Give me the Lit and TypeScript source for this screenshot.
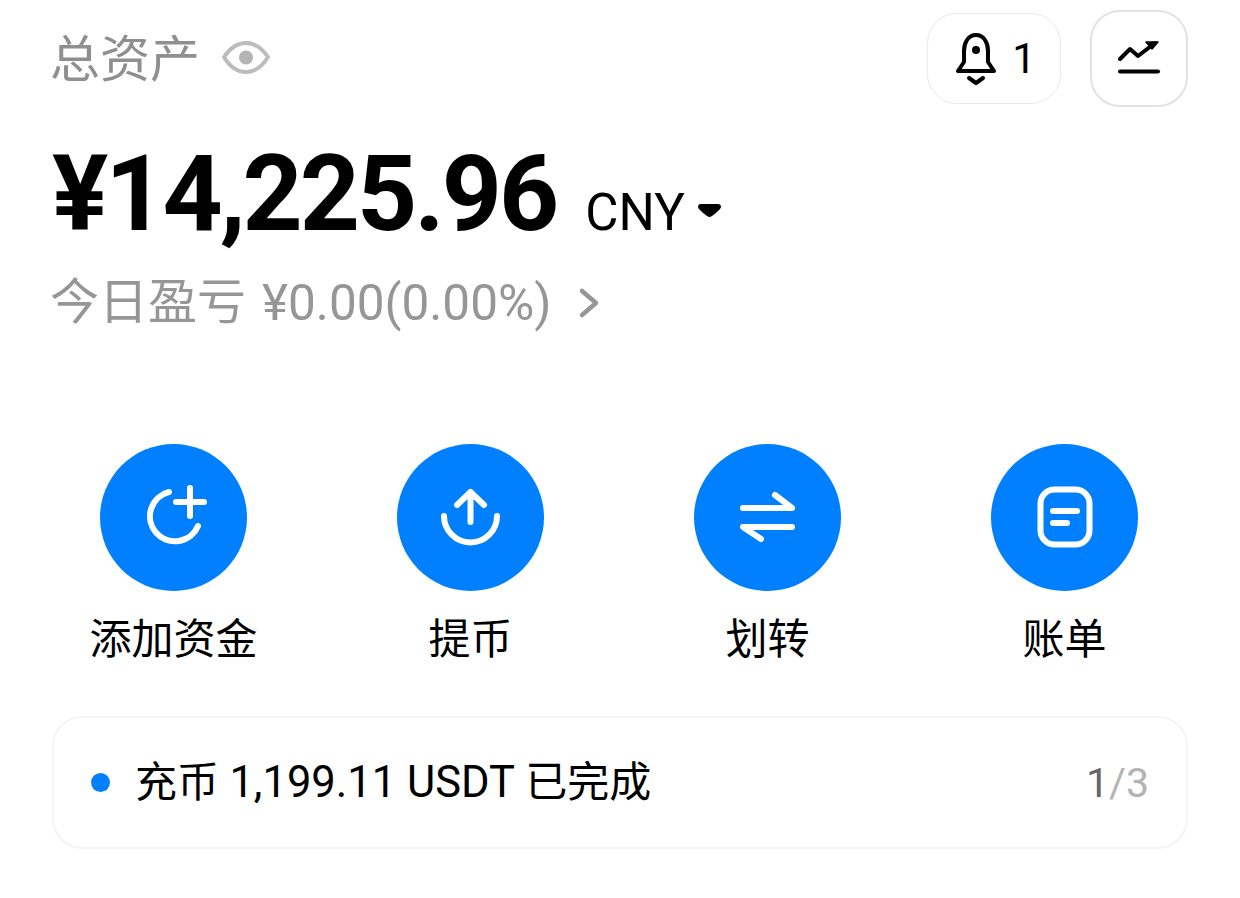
import { LitElement, html, css, svg } from 'lit';
import { customElement } from 'lit/decorators.js';

const actions = [
  {
    label: '添加资金',
    icon: svg`<path d="M69 48A25 25 0 1 0 98 82"/><path d="M76 58H104M90 44V72"/>`,
  },
  {
    label: '提币',
    icon: svg`<path d="M47 72A26.5 26.5 0 0 0 100 72"/><path d="M73.5 48V78M60 61L73.5 48L87 61"/>`,
  },
  {
    label: '划转',
    icon: svg`<path d="M49 64H98L81 51"/><path d="M98 83H49L67 95"/>`,
  },
  {
    label: '账单',
    icon: svg`<rect x="49.5" y="45.5" width="49" height="55" rx="14"/><path d="M62 67H86M62 79H76"/>`,
  },
];

@customElement('app-root')
export class AppRoot extends LitElement {
  static styles = css`
    :host {
      display: block;
      box-sizing: border-box;
      height: 898px;
      padding: 10px 52px 0;
      background: #fff;
      color: #000;
      font-family: Roboto, 'Noto Sans CJK SC', sans-serif;
    }

    svg {
      display: block;
      fill: none;
      stroke-linecap: round;
      stroke-linejoin: round;
    }

    .header {
      display: flex;
      align-items: center;
      height: 97px;
    }

    .title {
      display: flex;
      align-items: center;
      gap: 20px;
      flex: 1;
      margin-left: -2px;
      font-size: 50px;
      color: #8f8f8f;
    }

    .title span {
      margin-top: -8px;
    }

    .eye {
      stroke: #bcbcbc;
      stroke-width: 4;
      margin-top: -3px;
    }

    .eye circle {
      fill: #b4b4b4;
      stroke: none;
    }

    .bell,
    .chart {
      display: flex;
      align-items: center;
      justify-content: center;
      box-sizing: border-box;
      background: #fff;
    }

    .bell {
      gap: 12px;
      width: 134px;
      height: 91px;
      margin-right: 29px;
      border: 1px solid #e9e9e9;
      border-radius: 30px;
      font-size: 42px;
    }

    .chart {
      width: 98px;
      height: 97px;
      border: 2px solid #e2e2e2;
      border-radius: 30px;
    }

    .bell svg,
    .chart svg {
      stroke: #000;
      stroke-width: 4;
    }

    .bell circle,
    .chart .head {
      fill: #000;
    }

    .bell circle {
      stroke: none;
    }

    .amount-row {
      display: flex;
      align-items: baseline;
      margin-top: 26px;
    }

    .amount {
      font-size: 105px;
      font-weight: 700;
      line-height: 123px;
      letter-spacing: -3px;
    }

    .currency {
      margin-left: 29px;
      font-size: 51px;
    }

    .caret {
      align-self: center;
      margin: 32px 0 0 13px;
      fill: #000;
    }

    .pnl {
      display: flex;
      align-items: center;
      margin: 13px 0 0 -2px;
      font-size: 49px;
      line-height: 68px;
      color: #969696;
    }

    .pnl .value {
      margin-left: 16px;
      font-size: 49.500px;
    }

    .pnl svg {
      margin-left: 27px;
      stroke: #969696;
      stroke-width: 4.5;
    }

    .actions {
      display: grid;
      grid-template-columns: repeat(4, 297px);
      margin: 107px -27px 0;
    }

    .action {
      display: flex;
      flex-direction: column;
      align-items: center;
      gap: 20px;
      font-size: 42px;
      line-height: 58px;
    }

    .circle {
      width: 147px;
      height: 147px;
      border-radius: 50%;
      background: #0080ff;
    }

    .circle svg {
      stroke: #fff;
      stroke-width: 6;
    }

    .notice {
      display: flex;
      align-items: center;
      box-sizing: border-box;
      height: 133px;
      margin-top: 47px;
      padding: 0 37px;
      border: 2px solid #f4f4f4;
      border-radius: 30px;
      font-size: 42px;
    }

    .dot {
      width: 19px;
      height: 19px;
      margin-right: 25px;
      border-radius: 50%;
      background: #0080ff;
    }

    .message {
      flex: 1;
      margin-top: -8px;
    }

    .message .num {
      font-size: 43.500px;
    }

    .pager {
      font-size: 41px;
      color: #b3b3b3;
    }

    .pager b {
      font-weight: 400;
      color: #666;
    }
  `;

  render() {
    return html`
      <div class="header">
        <div class="title">
          <span>总资产</span>
          <svg class="eye" width="52" height="40" viewBox="0 0 52 40">
            <path d="M4 20C10 11 18 6 26 6C34 6 42 11 48 20C42 30 34 35 26 35C18 35 10 30 4 20Z" />
            <circle cx="26" cy="20.500" r="7" />
          </svg>
        </div>
        <div class="bell">
          <svg width="48" height="56" viewBox="0 0 48 56">
            <path d="M24 4C16 4 12 12 12 20V31L6 40H42L36 31V20C36 12 32 4 24 4Z" />
            <path d="M17 47L24 52L31 47" />
            <circle cx="24" cy="19" r="4" />
          </svg>
          <span>1</span>
        </div>
        <div class="chart">
          <svg width="44" height="40" viewBox="0 0 44 40">
            <path d="M3 20L13 10L21 17L38 4" />
            <path class="head" d="M29 3H41L35 10Z" stroke-width="1.500" />
            <path d="M3 32.500H41" />
          </svg>
        </div>
      </div>

      <div class="amount-row">
        <span class="amount">¥14,225.96</span>
        <span class="currency">CNY</span>
        <svg class="caret" width="23" height="13" viewBox="0 0 23 13" style="stroke:none">
          <path d="M0 3A3 3 0 0 1 3 0H20A3 3 0 0 1 23 3C23 5 14 13 11.500 13C9 13 0 5 0 3Z" />
        </svg>
      </div>

      <div class="pnl">
        <span>今日盈亏</span>
        <span class="value">¥0.00(0.00%)</span>
        <svg width="22" height="32" viewBox="0 0 22 32">
          <path d="M4 4L18 16L4 28" />
        </svg>
      </div>

      <div class="actions">
        ${actions.map(
          (a) => html`
            <div class="action">
              <div class="circle">
                <svg width="147" height="147" viewBox="0 0 147 147">${a.icon}</svg>
              </div>
              <span>${a.label}</span>
            </div>
          `
        )}
      </div>

      <div class="notice">
        <span class="dot"></span>
        <span class="message">充币 <span class="num">1,199.11 USDT</span> 已完成</span>
        <span class="pager"><b>1</b>/3</span>
      </div>
    `;
  }
}
